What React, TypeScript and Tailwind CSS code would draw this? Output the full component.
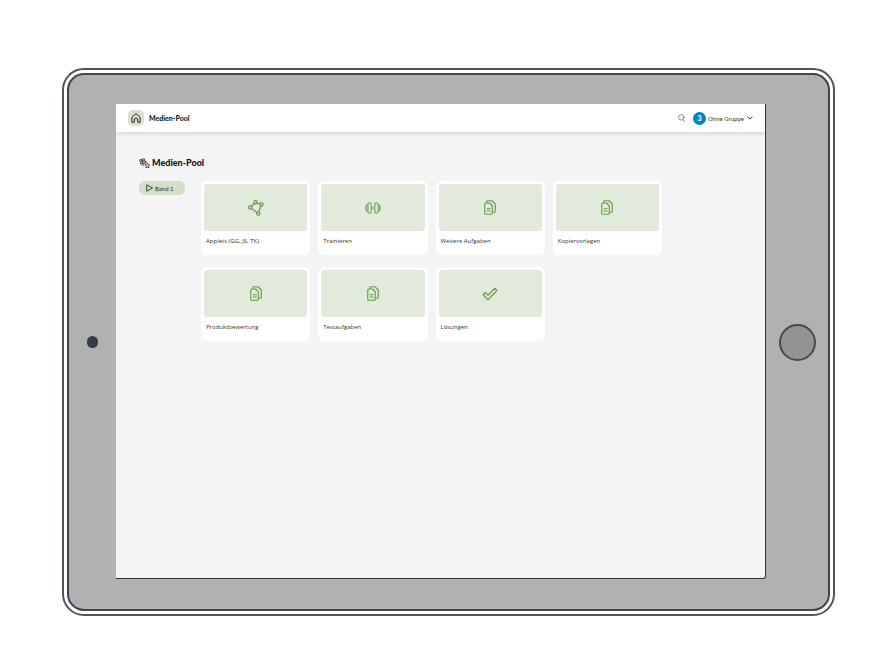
import type { ReactNode } from "react";

function HomeIcon() {
  return (
    <svg viewBox="0 0 20 20" className="h-2.5 w-2.5" fill="none" stroke="currentColor" strokeWidth="2" strokeLinejoin="round">
      <path d="M3.5 18.5H1.800V8.500L10 1.200l8.200 7.300v10h-4.700v-4.500a3.500 3.500 0 0 0-7 0v4.500z" />
    </svg>
  );
}

function PoolIcon() {
  return (
    <svg viewBox="0 0 22 22" className="h-[11px] w-[11px]" fill="none" stroke="currentColor" strokeWidth="1.5" strokeLinejoin="round">
      <path d="M1.5 3.5l9-2 2 8.5-9 2z" />
      <path d="M4 5.5l5-1M4.5 8l5.500-1.200M6.500 4.500l1.200 6" />
      <path d="M5 13.500l6 1M13 6l2 4.500" />
      <path d="M12.500 12.500l2.800.300 1.700-2 1.200 2.700 2.800.500-1.800 2.200.600 3-2.900-1-2.500 1.600.200-3z" />
    </svg>
  );
}

function PlayIcon() {
  return (
    <svg viewBox="0 0 14 16" className="h-2 w-[7px]" fill="none" stroke="currentColor" strokeWidth="1.8" strokeLinejoin="round">
      <path d="M1.500 1.500v13L13 8z" />
    </svg>
  );
}

function SearchIcon() {
  return (
    <svg viewBox="0 0 16 18" className="h-2 w-[7px]" fill="none" stroke="currentColor" strokeWidth="1.5" strokeLinecap="round">
      <circle cx="7.500" cy="7.500" r="6.300" />
      <path d="M11.500 13l2.800 4" />
    </svg>
  );
}

function ChevronIcon() {
  return (
    <svg viewBox="0 0 12 8" className="h-1 w-1.5" fill="none" stroke="currentColor" strokeWidth="2">
      <path d="M1 1.200l5 5 5-5" />
    </svg>
  );
}

function AppletIcon() {
  return (
    <svg viewBox="0 0 32 32" className="h-4 w-4" fill="none" stroke="currentColor" strokeWidth="2.400">
      <circle cx="4.500" cy="15" r="3.200" />
      <circle cx="15" cy="4.500" r="3.200" />
      <circle cx="27" cy="9" r="3.200" />
      <circle cx="20.500" cy="27" r="3.200" />
      <path d="M6.800 12.600l5.800-5.700M18 5.800l5.800 2M26 12.100l-4.400 11.800M7.200 17l10.700 8" />
    </svg>
  );
}

function DumbbellIcon() {
  return (
    <svg viewBox="0 0 32 24" className="h-3 w-4" fill="none" stroke="currentColor" strokeWidth="2">
      <rect x="6" y="1.500" width="6.500" height="21" rx="2.500" />
      <rect x="19.500" y="1.500" width="6.500" height="21" rx="2.500" />
      <path d="M12.500 12h7M6 5H4.500a2 2 0 0 0-2 2v10a2 2 0 0 0 2 2H6M26 5h1.500a2 2 0 0 1 2 2v10a2 2 0 0 1-2 2H26M2.500 12H0M29.500 12H32" />
    </svg>
  );
}

function PagesIcon() {
  return (
    <svg viewBox="0 0 24 30" className="h-[15px] w-3" fill="none" stroke="currentColor" strokeWidth="2.200" strokeLinejoin="round">
      <path d="M3.500 6H11l5.500 5.500V26.500a2 2 0 0 1-2 2h-11a2 2 0 0 1-2-2V8a2 2 0 0 1 2-2z" />
      <path d="M5.500 6V3.500a2 2 0 0 1 2-2H16l6.500 6.500v14.500a2 2 0 0 1-2 2h-4" />
      <path d="M5.500 17.500h7.500M5.500 22h7.500" />
    </svg>
  );
}

function CheckIcon() {
  return (
    <svg viewBox="0 0 32 28" className="h-3.5 w-4" fill="none" stroke="currentColor" strokeWidth="2.200" strokeLinejoin="round">
      <path d="M2 15.500l4.500-4.500 5.500 5.500L25.500 2.500 30 7 12 25.500z" />
    </svg>
  );
}

const tiles: { label: string; icon: ReactNode }[] = [
  { label: "Applets (GG, JS, TK)", icon: <AppletIcon /> },
  { label: "Trainieren", icon: <DumbbellIcon /> },
  { label: "Weitere Aufgaben", icon: <PagesIcon /> },
  { label: "Kopiervorlagen", icon: <PagesIcon /> },
  { label: "Produktbewertung", icon: <PagesIcon /> },
  { label: "Testaufgaben", icon: <PagesIcon /> },
  { label: "Lösungen", icon: <CheckIcon /> },
];

function Header() {
  return (
    <header className="z-10 flex h-7 items-center bg-white px-3 shadow-[0_1px_5px_rgba(0,0,0,0.16)]">
      <a href="#" aria-label="Startseite" className="flex h-4 w-4 items-center justify-center rounded-[5px] bg-[#dfdcd0] text-[#2b2b2b]">
        <HomeIcon />
      </a>
      <span className="ml-[5px] text-[7px] font-black text-[#15181c]">Medien-Pool</span>
      <button type="button" aria-label="Suchen" className="ml-auto text-[#555]">
        <SearchIcon />
      </button>
      <button type="button" className="ml-2 flex items-center text-[6px] text-[#333]">
        <span className="mr-0.5 flex h-[13px] w-[13px] items-center justify-center rounded-full bg-[#0083c9] text-[7px] font-black text-white">3</span>
        Ohne Gruppe
        <span className="ml-[3px]">
          <ChevronIcon />
        </span>
      </button>
    </header>
  );
}

function Tile({ label, icon }: { label: string; icon: ReactNode }) {
  return (
    <a href="#" className="flex h-[74px] flex-col rounded-md bg-white p-[3px]">
      <div className="flex h-[47px] items-center justify-center rounded-[3px] bg-[#e1eadb] text-[#659a47]">{icon}</div>
      <span className="mt-[5px] pl-0.5 font-['Open_Sans',sans-serif] text-[6px] leading-[10px] text-[#333]">{label}</span>
    </a>
  );
}

export default function App() {
  return (
    <div className="flex min-h-screen flex-col bg-white pb-14 pl-[62px] pr-[51px] pt-[68px] font-['Lato','Open_Sans',sans-serif]">
      <div className="flex flex-1 flex-col rounded-[22px] border-2 border-[#50545d] p-[3px]">
        <div className="flex flex-1 rounded-[17px] border-2 border-[#3f444e] bg-[#b0b1b3]">
          <div className="flex w-[47px] items-center justify-center">
            <span className="h-3 w-[11px] rounded-full bg-[#343a46]" />
          </div>
          <div className="mb-[30px] mt-[29px] flex flex-1 flex-col overflow-hidden rounded-br-[3px] border-b border-r border-[#30343c] bg-[#f4f4f4]">
            <Header />
            <main className="flex-1 pl-[23px] pr-[103px] pt-[25px]">
              <h1 className="flex h-3 items-center gap-0.5 text-[9px] font-black text-[#111]">
                <PoolIcon />
                Medien-Pool
              </h1>
              <div className="mt-3 flex items-start gap-4">
                <button type="button" className="flex h-3.5 w-[46px] items-center gap-0.5 rounded-md bg-[#d0e0c8] pl-[7px] text-[6px] text-[#333]">
                  <PlayIcon />
                  Band 1
                </button>
                <div className="grid flex-1 grid-cols-4 gap-x-2 gap-y-3">
                  {tiles.map((tile) => (
                    <Tile key={tile.label} label={tile.label} icon={tile.icon} />
                  ))}
                </div>
              </div>
            </main>
          </div>
          <div className="flex w-[62px] items-center justify-center">
            <button type="button" aria-label="Home" className="h-[37px] w-[37px] rounded-full border-2 border-[#454a53] bg-[#929395]" />
          </div>
        </div>
      </div>
    </div>
  );
}
